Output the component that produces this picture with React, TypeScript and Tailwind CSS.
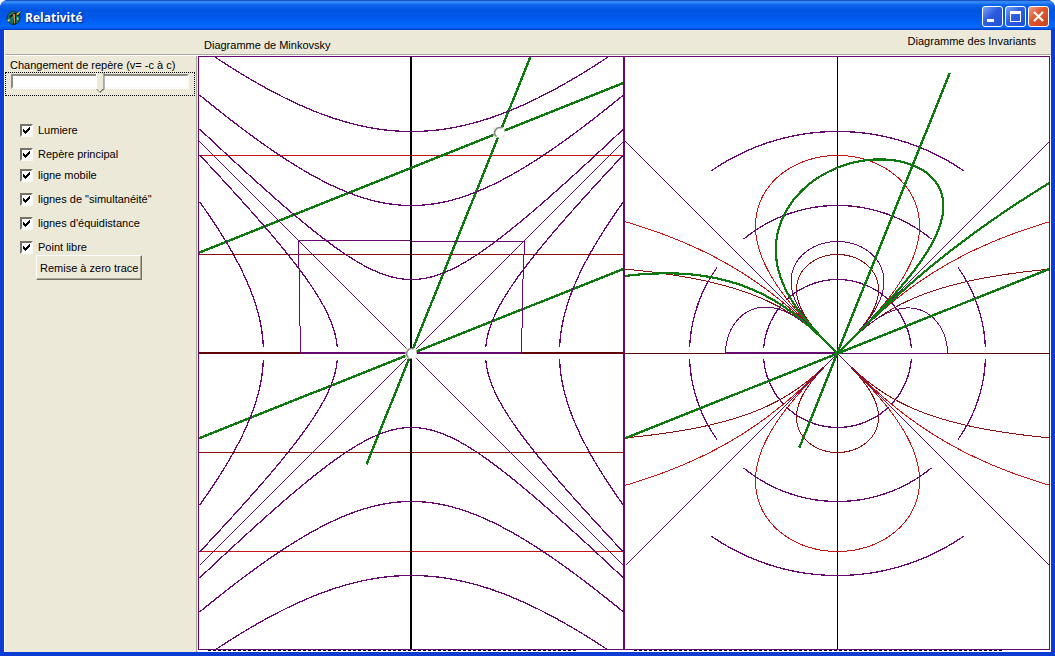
import { useState } from "react";
import type { ReactNode } from "react";

const PURPLE = "#640a6c";
const RED = "#c41414";
const MAROON = "#8a1010";
const GREEN = "#107810";

// speed of the moving frame, in units of c
const V = 0.4;
// the free event: [x, t]
const EVENT: Point = [88, 221];

type Point = [number, number];

const options = [
  { id: "light", label: "Lumiere" },
  { id: "frame", label: "Repère principal" },
  { id: "mobile", label: "ligne mobile" },
  { id: "simultaneity", label: 'lignes de "simultanéité"' },
  { id: "equidistance", label: "lignes d'équidistance" },
  { id: "free", label: "Point libre" },
];

function sample(from: number, to: number, fn: (u: number) => Point, steps = 400): Point[] {
  return Array.from({ length: steps + 1 }, (_, i) => fn(from + ((to - from) * i) / steps));
}

// keeps the direction, replaces the length by the interval sqrt|t² - x²|
function invariant([x, t]: Point): Point {
  const r = Math.hypot(x, t);
  if (r === 0) return [0, 0];
  const s = Math.sqrt(Math.abs(t * t - x * x));
  return [(x * s) / r, (t * s) / r];
}

function toPath(points: Point[]) {
  return points.map(([x, t], i) => `${i ? "L" : "M"}${x.toFixed(2)} ${(-t).toFixed(2)}`).join("");
}

const hyperbolas: Point[][] = [
  ...[74, 148, 222].flatMap((a) =>
    [1, -1].map((sign) => sample(-212, 212, (x) => [x, sign * Math.hypot(a, x)] as Point))
  ),
  ...[74, 148].flatMap((a) => {
    const end = Math.sqrt(212 * 212 - a * a);
    return [1, -1].flatMap((sign) => [
      sample(6, end, (t) => [sign * Math.hypot(a, t), t] as Point),
      sample(-6, -end, (t) => [sign * Math.hypot(a, t), t] as Point),
    ]);
  }),
];

const horizontals = [
  { t: 198, color: RED },
  { t: 99, color: MAROON },
  { t: -99, color: MAROON },
  { t: -198, color: RED },
];

const square: Point[][] = [
  sample(-113, 113, (x) => [x, 112]),
  sample(0, 112, (t) => [-112, t]),
  sample(0, 112, (t) => [110, t]),
];

const simultaneous = (x: number): Point => [x, EVENT[1] + V * (x - EVENT[0])];

function Curve({ points, color, width = 1 }: { points: Point[]; color: string; width?: number }) {
  return <path d={toPath(points)} fill="none" stroke={color} strokeWidth={width} />;
}

function Handle({ at: [x, t] }: { at: Point }) {
  return (
    <g transform={`translate(${x} ${-t})`} shapeRendering="auto">
      <rect x="-6" y="-5" width="11" height="10" fill="#ece9d8" />
      <circle r="5" fill="#fff" />
      <path d="M2 -4.5A5 5 0 0 0 -3 4" fill="none" stroke="#848284" strokeWidth="1.5" />
    </g>
  );
}

function Plot({ title, children }: { title: string; children: ReactNode }) {
  return (
    <div className="relative min-w-0 flex-1 border border-[#640a6c] bg-white">
      <svg
        role="img"
        aria-label={title}
        viewBox="-212.5 -296.5 424 592"
        preserveAspectRatio="xMidYMid slice"
        shapeRendering="crispEdges"
        className="absolute inset-0 h-full w-full"
      >
        {children}
      </svg>
    </div>
  );
}

function Diagonals() {
  return <path d="M-212 -212L212 212M-212 212L212 -212" stroke={PURPLE} />;
}

function Minkowski({ show }: { show: Record<string, boolean> }) {
  return (
    <Plot title="Diagramme de Minkovsky">
      {show.frame && (
        <>
          {horizontals.map(({ t, color }) => (
            <rect key={t} x="-213" y={-t - 0.5} width="426" height="1" fill={color} />
          ))}
          <path d="M-0.5 -297V297" stroke="#000" strokeWidth="2" />
          <path d="M-213 -0.5H213" stroke="#600606" strokeWidth="2" />
          <path d="M-112 -0.5H110" stroke={PURPLE} strokeWidth="2" />
        </>
      )}
      {show.mobile && (
        <Curve points={[[-45, -111], [119, 297]]} color={GREEN} width={2.4} />
      )}
      {show.simultaneity && (
        <>
          <Curve points={[[-213, -85], [213, 85]]} color={GREEN} width={2.4} />
          <Curve points={[simultaneous(-213), simultaneous(213)]} color={GREEN} width={2.4} />
        </>
      )}
      {show.equidistance &&
        hyperbolas.map((points, i) => <Curve key={i} points={points} color={PURPLE} width={1.3} />)}
      {show.light && <Diagonals />}
      <path d="M-111 0L-113 -113H-1M0 -112H113V-99L112 -98L110 0" fill="none" stroke={PURPLE} />
      <Handle at={[0, 0]} />
      {show.free && <Handle at={EVENT} />}
    </Plot>
  );
}

function Invariants({ show }: { show: Record<string, boolean> }) {
  return (
    <Plot title="Diagramme des Invariants">
      {show.frame && (
        <>
          <path d="M0 -297V297" stroke="#000" />
          <rect x="-213" y="-0.5" width="426" height="1" fill="#600606" />
          <path d="M-112 -0.5H0" stroke={PURPLE} strokeWidth="2" />
          <path d="M0 0H110" stroke={PURPLE} />
          {horizontals.map(({ t, color }) => (
            <Curve key={t} points={sample(-700, 700, (x) => invariant([x, t]), 1400)} color={color} />
          ))}
          <path d="M-16 16L0 0L16 16" fill="none" stroke={RED} />
        </>
      )}
      {square.map((points, i) => (
        <Curve key={i} points={points.map(invariant)} color={PURPLE} />
      ))}
      {show.equidistance &&
        hyperbolas.map((points, i) => (
          <Curve key={i} points={points.map(invariant)} color={PURPLE} width={1.3} />
        ))}
      {show.light && <Diagonals />}
      {show.mobile && (
        <Curve points={[invariant([-45, -111]), invariant([132, 330])]} color={GREEN} width={2.4} />
      )}
      {show.simultaneity && (
        <>
          <Curve points={[[-213, -85], [213, 85]]} color={GREEN} width={2.4} />
          <Curve
            points={sample(-900, 1200, (x) => invariant(simultaneous(x)), 2100)}
            color={GREEN}
            width={2.2}
          />
          <path d="M-16 -16L0 0L16 -16" fill="none" stroke={GREEN} strokeWidth="2" />
        </>
      )}
    </Plot>
  );
}

function AppIcon() {
  return (
    <svg width="16" height="16" viewBox="0 0 16 16" aria-hidden="true">
      <circle cx="7.5" cy="8" r="6.5" fill="#12706a" stroke="#12302c" />
      <path d="M3 6L7 2L9 4L6 8Z" fill="#2c9c70" />
      <path d="M3 6L8 3L12 3L15 1L13 6L10 5V14L7 15V6L4 8Z" fill="#181c10" />
      <path d="M7 4H9V13L8 14Z" fill="#d88c34" />
      <path d="M10 4L15 1L12 5Z M1 10L4 9L3 12Z M11 7L13 9L11 10Z" fill="#e8e044" />
    </svg>
  );
}

function TitleBar() {
  const button =
    "flex h-[21px] w-[21px] items-center justify-center rounded-[3px] border border-white";
  return (
    <header className="flex h-[30px] shrink-0 items-center justify-between bg-[linear-gradient(180deg,#0a3cb4_0%,#3c94fc_6%,#0c64ec_16%,#0054e0_35%,#0058ec_60%,#0268fe_85%,#0262f6_92%,#003cc4_100%)] pt-[3px] pr-1.5 pl-1.5">
      <div className="flex items-center gap-[3px] pt-0.5">
        <AppIcon />
        <h1 className="font-['Open_Sans','Noto_Sans',sans-serif] text-[12px] leading-4 font-bold text-white [text-shadow:1px_1px_1px_#0a1e80]">
          Relativité
        </h1>
      </div>
      <div className="flex gap-0.5">
        <button
          type="button"
          aria-label="Réduire"
          className={`${button} bg-[linear-gradient(135deg,#7ca4f4,#2c5ce0_45%,#1c50d8)]`}
        >
          <svg width="15" height="15" viewBox="0 0 15 15" shapeRendering="crispEdges">
            <rect x="2" y="10" width="7" height="3" fill="#fff" />
          </svg>
        </button>
        <button
          type="button"
          aria-label="Agrandir"
          className={`${button} bg-[linear-gradient(135deg,#7ca4f4,#2c5ce0_45%,#1c50d8)]`}
        >
          <svg width="15" height="15" viewBox="0 0 15 15" shapeRendering="crispEdges">
            <path d="M2 2H13V13H2ZM3 5V12H12V5Z" fill="#fff" fillRule="evenodd" />
          </svg>
        </button>
        <button
          type="button"
          aria-label="Fermer"
          className={`${button} bg-[linear-gradient(135deg,#f0a088,#e05830_40%,#cc4018)]`}
        >
          <svg width="15" height="15" viewBox="0 0 15 15">
            <path d="M3 3L12 12M12 3L3 12" stroke="#fff" strokeWidth="2.2" />
          </svg>
        </button>
      </div>
    </header>
  );
}

interface OptionProps {
  id: string;
  label: string;
  checked: boolean;
  onToggle: (id: string) => void;
}

function Option({ id, label, checked, onToggle }: OptionProps) {
  return (
    <label className="flex h-6 items-center gap-[5px]">
      <span className="relative h-[13px] w-[13px]">
        <input
          type="checkbox"
          checked={checked}
          onChange={() => onToggle(id)}
          className="block h-[13px] w-[13px] appearance-none border-2 border-t-[#74726a] border-r-[#fbfaf4] border-b-[#fbfaf4] border-l-[#74726a] bg-white"
        />
        {checked && (
          <svg
            viewBox="0 0 7 7"
            shapeRendering="crispEdges"
            className="pointer-events-none absolute top-[3px] left-[3px] h-[7px] w-[7px]"
          >
            <path d="M0 2H1V3H2V4H3V3H4V2H5V1H6V0H7V3H6V4H5V5H4V6H3V7H2V6H1V5H0Z" fill="#000" />
          </svg>
        )}
      </span>
      {label}
    </label>
  );
}

export default function App() {
  const [show, setShow] = useState<Record<string, boolean>>(
    Object.fromEntries(options.map(({ id }) => [id, true]))
  );
  const toggle = (id: string) => setShow((s) => ({ ...s, [id]: !s[id] }));

  return (
    <div className="flex min-h-screen flex-col overflow-hidden rounded-t-lg bg-[#0c3cd4] font-['Liberation_Sans',Arial,sans-serif] text-[11px] leading-[14px] text-black">
      <TitleBar />
      <main className="mx-1 mb-1 flex flex-1 flex-col border-l border-[#fbfaf4] bg-[#ece9d8]">
        <div className="flex h-[25px] items-start justify-between border-b border-[#aca899] pr-[15px] pl-[199px]">
          <h2 className="pt-2">Diagramme de Minkovsky</h2>
          <h2 className="pt-1">Diagramme des Invariants</h2>
        </div>
        <div className="flex flex-1 border-t border-white">
          <aside className="flex w-48 shrink-0 flex-col border-r border-[#aca899]">
            <label htmlFor="speed" className="pt-0.5 pl-[5px]">
              Changement de repère (v= -c à c)
            </label>
            <div className="mr-px border border-dotted border-black px-[5px] pt-px pb-px">
              <input
                id="speed"
                type="range"
                min={-100}
                max={100}
                defaultValue={0}
                className="block h-5 w-full appearance-none bg-transparent [&::-webkit-slider-runnable-track]:mb-[5px] [&::-webkit-slider-runnable-track]:h-[15px] [&::-webkit-slider-runnable-track]:border-2 [&::-webkit-slider-runnable-track]:border-t-[#8c8a80] [&::-webkit-slider-runnable-track]:border-r-[#fbfaf4] [&::-webkit-slider-runnable-track]:border-b-[#fbfaf4] [&::-webkit-slider-runnable-track]:border-l-[#8c8a80] [&::-webkit-slider-runnable-track]:bg-white [&::-webkit-slider-thumb]:-mt-[3px] [&::-webkit-slider-thumb]:h-[20px] [&::-webkit-slider-thumb]:w-[9px] [&::-webkit-slider-thumb]:appearance-none [&::-webkit-slider-thumb]:bg-[linear-gradient(to_top_left,#716f64_75%,transparent_75%),linear-gradient(to_top_right,#aca899_75%,transparent_75%),linear-gradient(90deg,#fff_1px,#ece9d8_1px_7px,#aca899_7px_8px,#716f64_8px)] [&::-webkit-slider-thumb]:bg-[position:100%_100%,0_100%,0_0] [&::-webkit-slider-thumb]:bg-[size:5px_4px,4px_4px,100%_100%] [&::-webkit-slider-thumb]:bg-no-repeat [&::-webkit-slider-thumb]:[clip-path:polygon(0_0,100%_0,100%_80%,50%_100%,0_80%)]"
              />
            </div>
            <div className="mt-[22px] flex flex-col pl-[15px]">
              {options.slice(0, 2).map((option) => (
                <Option key={option.id} {...option} checked={show[option.id]} onToggle={toggle} />
              ))}
            </div>
            <div className="-mt-[3px] flex flex-col pl-[15px]">
              {options.slice(2).map((option) => (
                <Option key={option.id} {...option} checked={show[option.id]} onToggle={toggle} />
              ))}
            </div>
            <button
              type="button"
              className="relative -mt-1 ml-[31px] h-[25px] self-start border border-t-white border-r-[#716f64] border-b-[#716f64] border-l-white bg-[#ece9d8] px-[3px] shadow-[inset_-1px_-1px_#aca899]"
            >
              Remise à zero trace
            </button>
          </aside>
          <section className="ml-px flex flex-1 flex-col bg-white pr-px">
            <div className="flex flex-1">
              <Minkowski show={show} />
              <Invariants show={show} />
            </div>
            <div className="flex h-0.5">
              <div className="flex-1 pr-12 pl-2.5">
                <div className="border-t border-dashed border-black" />
              </div>
              <div className="flex-1 pr-12 pl-2.5">
                <div className="border-t border-dashed border-black" />
              </div>
            </div>
          </section>
        </div>
      </main>
    </div>
  );
}
